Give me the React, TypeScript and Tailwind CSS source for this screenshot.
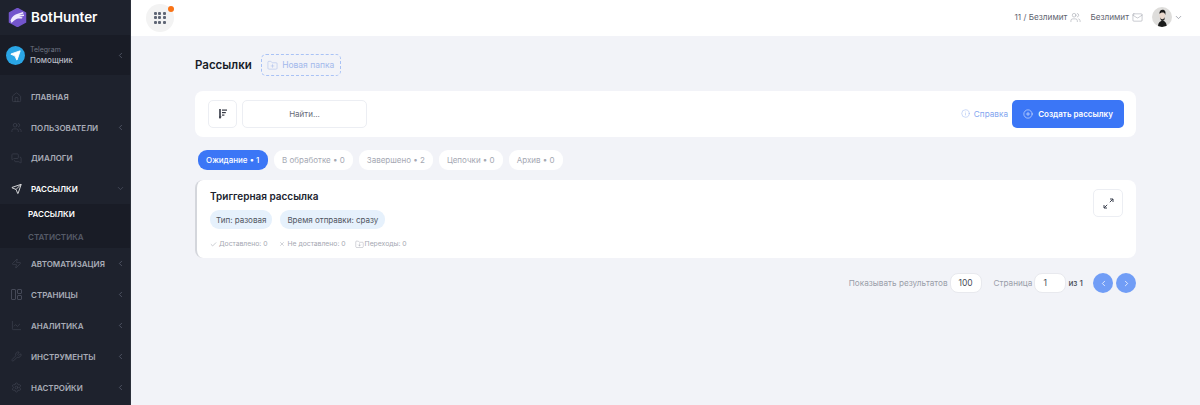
import type { ReactNode } from "react";
import {
  ChevronDown,
  ChevronLeft,
  ChevronRight,
  Check,
  FolderDown,
  FolderPlus,
  Home,
  Info,
  LineChart,
  Mail,
  MessagesSquare,
  CirclePlus,
  Send,
  Settings,
  Users,
  Wrench,
  X,
  Zap,
} from "lucide-react";

const font = { fontFamily: "Inter, 'Noto Sans', sans-serif" };

function PagesIcon() {
  return (
    <svg width="11" height="11" viewBox="0 0 11 11" fill="none" stroke="currentColor" strokeWidth="0.9">
      <rect x="0.5" y="0.5" width="4" height="10" rx="0.5" />
      <rect x="6.5" y="0.5" width="4" height="4" rx="0.5" />
      <rect x="6.5" y="6.5" width="4" height="4" rx="0.5" />
    </svg>
  );
}

function NavItem({ icon, label, chevron = true, active = false, open = false, tall = false }: { icon: ReactNode; label: string; chevron?: boolean; active?: boolean; open?: boolean; tall?: boolean }) {
  return (
    <div className={`${tall ? "h-[31px]" : "h-[30.5px]"} flex items-center pl-[11px] pr-[5px] shrink-0`}>
      <span className={`w-[11px] flex justify-center ${active ? "text-white" : "text-[#4a4e5c]"}`}>{icon}</span>
      <span className={`ml-[9px] text-[8px] font-semibold flex-1 ${active ? "text-white" : "text-[#a9adb8]"}`}>{label}</span>
      {chevron && (open ? <ChevronDown size={9} className="text-[#4b5060]" /> : <ChevronLeft size={9} className="text-[#5b6070]" />)}
    </div>
  );
}

function Logo() {
  return (
    <svg width="19" height="19" viewBox="0 0 19 19">
      <polygon points="9.5,0.5 17.5,4.8 17.5,14.2 9.5,18.5 1.5,14.2 1.5,4.8" fill="#7355cc" stroke="#7355cc" strokeWidth="1.5" strokeLinejoin="round" />
      <path d="M2.5 12.5 C4 8.5 6.5 6.5 9 6 L15 4 L15.5 5.4 L11 7 L16 6.6 L16 8 L11 8.8 L14.5 9.2 L14 10.6 L10 10.6 C8 11.2 6 12.6 3.5 15 Z" fill="#eee9fd" />
    </svg>
  );
}

function Tab({ children, active = false }: { children: ReactNode; active?: boolean }) {
  return (
    <div className={`h-[20px] px-[8px] rounded-[9px] flex items-center text-[8px] ${active ? "w-[70px] bg-[#3b76f6] text-white font-medium" : "bg-white text-[#a5a8b3]"}`}>
      {children}
    </div>
  );
}

function Avatar() {
  return (
    <svg width="20" height="20" viewBox="0 0 20 20">
      <clipPath id="av"><circle cx="10" cy="10" r="10" /></clipPath>
      <g clipPath="url(#av)">
        <rect width="20" height="20" fill="#dedddb" />
        <path d="M6 20 C6 16 7.5 15 9 14 L12 14 C14 15 14.5 17 15 20 Z" fill="#1b1b1b" />
        <ellipse cx="10.2" cy="8" rx="2.8" ry="4.6" fill="#e9d8cd" />
        <path d="M7.5 7 C7 3 10 2 12 3 C14 4 13.6 6 13.2 8 C12.8 6 12 5.5 10.5 5.5 C9 5.5 8.5 6 7.5 7 Z" fill="#1b1b1b" />
        <path d="M8 10 C9 13 11.5 13 12.8 10 L12.4 13 L10 14.5 L8.6 12.5 Z" fill="#2b2b2b" />
      </g>
    </svg>
  );
}

export default function App() {
  return (
    <div className="w-[1200px] h-[405px] flex overflow-hidden bg-[#f2f3f8]" style={font}>
      <aside className="w-[131px] h-full shrink-0 bg-[#1e222d] border-r border-[#2b2f3a] flex flex-col overflow-hidden">
        <div className="h-[36px] flex items-center pl-[8px] shrink-0 -mt-[1px]">
          <Logo />
          <span className="ml-[4px] text-white text-[13.5px] font-semibold">BotHunter</span>
        </div>
        <div className="h-[40px] bg-[#191c26] flex items-center pl-[6px] pr-[5px] shrink-0">
          <div className="w-[19px] h-[19px] rounded-full bg-[#2aa5e5] flex items-center justify-center">
            <Send size={11} className="text-white fill-white -ml-[1px]" />
          </div>
          <div className="ml-[5px] flex-1 leading-none">
            <div className="text-[7px] text-[#6f7482]">Telegram</div>
            <div className="text-[8px] text-[#b6bac4] mt-[3px] font-medium">Помощник</div>
          </div>
          <ChevronLeft size={9} className="text-[#5b6070]" />
        </div>
        <div className="h-[7px] shrink-0" />
        <NavItem icon={<Home size={11} strokeWidth={1.1} />} label="ГЛАВНАЯ" chevron={false} />
        <NavItem icon={<Users size={11} strokeWidth={1.1} />} label="ПОЛЬЗОВАТЕЛИ" />
        <NavItem icon={<MessagesSquare size={11} strokeWidth={1.1} />} label="ДИАЛОГИ" chevron={false} />
        <NavItem icon={<Send size={12} strokeWidth={1.75} />} label="РАССЫЛКИ" active open />
        <div className="h-[44px] bg-[#191c26] flex flex-col shrink-0 pl-[28px] text-[8px] font-semibold">
          <div className="h-[20px] flex items-center text-white">РАССЫЛКИ</div>
          <div className="h-[24px] pt-[2px] flex items-center text-[#565b68]">СТАТИСТИКА</div>
        </div>
        <NavItem tall icon={<Zap size={11} strokeWidth={1.1} />} label="АВТОМАТИЗАЦИЯ" />
        <NavItem tall icon={<PagesIcon />} label="СТРАНИЦЫ" />
        <NavItem tall icon={<LineChart size={11} strokeWidth={1.1} />} label="АНАЛИТИКА" />
        <NavItem tall icon={<Wrench size={11} strokeWidth={1.1} />} label="ИНСТРУМЕНТЫ" />
        <NavItem tall icon={<Settings size={11} strokeWidth={1.1} />} label="НАСТРОЙКИ" />
      </aside>

      <div className="flex-1 flex flex-col min-w-0">
        <header className="h-[36px] bg-white shrink-0 flex items-center pl-[15px] pr-[17px]">
          <div className="relative w-[28px] h-[28px] rounded-full bg-[#f3f3f3] grid grid-cols-3 place-items-center p-[8px] gap-[1px]">
            {Array.from({ length: 9 }).map((_, i) => (
              <span key={i} className="w-[3px] h-[3px] bg-[#5f6675] rounded-[1px]" />
            ))}
            <span className="absolute top-[2px] right-0 w-[6px] h-[6px] rounded-full bg-[#f97316]" />
          </div>
          <div className="ml-auto pb-[2px] flex items-center text-[8.2px] text-[#5f6470]">
            <span>11 / Безлимит</span>
            <Users size={11} strokeWidth={1} className="ml-[3px] text-[#8b8f9a]" />
            <span className="ml-[9px]">Безлимит</span>
            <Mail size={11} strokeWidth={1} className="ml-[3px] text-[#8b8f9a]" />
            <span className="ml-[9px]"><Avatar /></span>
            <ChevronDown size={9} className="ml-[2px] text-[#8b8f9a]" />
          </div>
        </header>

        <main className="pl-[64px] pr-[64px] flex-1">
          <div className="h-[22px] mt-[18px] flex items-center">
            <h1 className="pt-[2px] text-[11.5px] font-semibold text-[#181c28]">Рассылки</h1>
            <button className="ml-[9px] w-[80px] h-[22px] pt-[1px] rounded-[5px] border border-dashed border-[#a9c2f5] flex items-center justify-center text-[8.5px] text-[#a3b9ec]">
              <FolderPlus size={11} strokeWidth={1.1} className="mr-[4px]" />
              Новая папка
            </button>
          </div>

          <section className="mt-[15px] h-[46px] bg-white rounded-[8px] flex items-center pl-[13px] pr-[12px]">
            <div className="w-[29px] h-[28px] rounded-[5px] border border-[#eceef3] flex items-center justify-center text-[#343844]">
              <svg width="8" height="10" viewBox="0 0 8 10" fill="currentColor">
                <path d="M0.2 0h1.6v7.5h.9L1 10-.7 7.5h.9z" />
                <rect x="3" y="0.5" width="5" height="1.2" />
                <rect x="3" y="3" width="3.8" height="1.2" />
                <rect x="3" y="5.5" width="2.4" height="1.2" />
              </svg>
            </div>
            <div className="ml-[5px] w-[125px] h-[28px] rounded-[5px] border border-[#eceef3] flex items-center justify-center text-[8px] text-[#666b78]">Найти...</div>
            <div className="ml-auto flex items-center text-[8.2px] text-[#84a6ef]">
              <Info size={9} strokeWidth={1.1} className="mr-[4px]" />
              Справка
            </div>
            <button className="ml-[4px] w-[112px] h-[28px] rounded-[5px] bg-[#3b76f6] flex items-center justify-center text-[8px] font-semibold text-white">
              <CirclePlus size={10} strokeWidth={1.25} className="mr-[5px]" />
              Создать рассылку
            </button>
          </section>

          <nav className="mt-[13px] ml-[3px] flex gap-[6px]">
            <Tab active>Ожидание • 1</Tab>
            <Tab>В обработке • 0</Tab>
            <Tab>Завершено • 2</Tab>
            <Tab>Цепочки • 0</Tab>
            <Tab>Архив • 0</Tab>
          </nav>

          <article className="mt-[10px] h-[78px] bg-white rounded-[8px] border-l-2 border-[#d4d6dc] flex pl-[13px] pr-[13px]">
            <div className="flex-1">
              <h2 className="mt-[9px] text-[10px] font-semibold leading-[14px] text-[#20232e]">Триггерная рассылка</h2>
              <div className="mt-[7px] flex gap-[8px]">
                <span className="h-[19px] px-[6px] rounded-[9px] bg-[#e6f1fc] text-[8px] text-[#50555f] flex items-center">Тип: разовая</span>
                <span className="h-[19px] px-[7px] rounded-[9px] bg-[#e6f1fc] text-[8px] text-[#50555f] flex items-center">Время отправки: сразу</span>
              </div>
              <div className="mt-[10px] flex items-center text-[6.8px] text-[#a5a8b2]">
                <Check size={7} className="mr-[2px]" />
                Доставлено: 0
                <X size={6} className="ml-[12px] mr-[2px]" />
                Не доставлено: 0
                <FolderDown size={9} strokeWidth={1.25} className="ml-[9px] mr-[1px]" />
                Переходы: 0
              </div>
            </div>
            <div className="mt-[9px] w-[30px] h-[28px] rounded-[5px] border border-[#eceef3] flex items-center justify-center text-[#3d4250]">
              <svg width="11" height="11" viewBox="0 0 11 11" fill="none" stroke="currentColor" strokeWidth="1">
                <path d="M7 1H10V4M10 1L6.8 4.2" />
                <path d="M1 7V10H4M1 10L4.2 6.8" />
              </svg>
            </div>
          </article>

          <footer className="mt-[15px] flex items-center justify-end text-[8.2px] text-[#9a9ea9]">
            <span>Показывать результатов</span>
            <span className="ml-[2px] w-[32px] h-[20px] bg-white rounded-[8px] border border-[#e8e9ee] flex items-center justify-center text-[8.5px] text-[#4a4e59]">100</span>
            <span className="ml-[12px]">Страница</span>
            <span className="ml-[2px] w-[32px] h-[20px] bg-white rounded-[8px] border border-[#e8e9ee] flex items-center pl-[8px] text-[8.5px] text-[#4a4e59]">1</span>
            <span className="ml-[2px] text-[#4a4e59] font-medium">из 1</span>
            <button className="ml-[10px] w-[20px] h-[20px] rounded-full bg-[#719df6] flex items-center justify-center text-white"><ChevronLeft size={9} /></button>
            <button className="ml-[3px] w-[20px] h-[20px] rounded-full bg-[#719df6] flex items-center justify-center text-white"><ChevronRight size={9} /></button>
          </footer>
        </main>
      </div>
    </div>
  );
}
